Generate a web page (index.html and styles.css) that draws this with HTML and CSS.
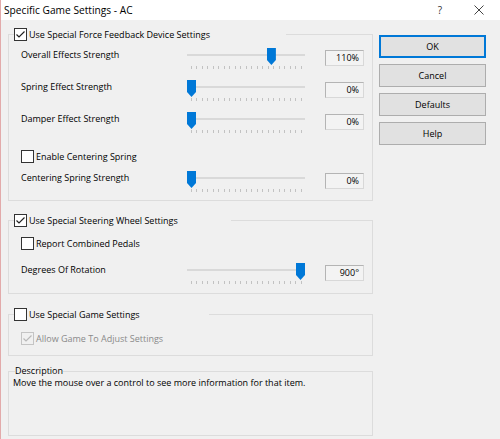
FILE: index.html
```html
<!DOCTYPE html>
<html lang="en">
<head>
  <meta charset="UTF-8" />
  <title>Specific Game Settings - AC</title>
  <link rel="stylesheet" href="styles.css">
</head>
<body>
  <div class="window">
    <div class="titlebar">
      <span class="title">Specific Game Settings - AC</span>
      <span class="tb-help">?</span>
      <span class="tb-close">
        <svg width="10" height="10" viewBox="0 0 10 10"><path d="M0.5 0.5L9.5 9.5M9.5 0.5L0.5 9.5"/></svg>
      </span>
    </div>

    <div class="dialog">
      <div class="panels">
        <!-- force feedback -->
        <fieldset class="group">
          <legend class="legend-ffb">
            <span class="cb"><svg viewBox="0 0 11 11"><path d="M1.5 5.5L4 8L9.5 2.5"/></svg></span>Use Special Force Feedback Device Settings
          </legend>
          <div class="group-body body-ffb">
            <div class="slider-row">
              <span class="row-label">Overall Effects Strength</span>
              <div class="slider" style="--pos: 0.733"><div class="track"></div><div class="ticks"></div><div class="thumb"></div></div>
              <span class="value">110%</span>
            </div>
            <div class="slider-row">
              <span class="row-label">Spring Effect Strength</span>
              <div class="slider" style="--pos: 0"><div class="track"></div><div class="ticks"></div><div class="thumb"></div></div>
              <span class="value">0%</span>
            </div>
            <div class="slider-row">
              <span class="row-label">Damper Effect Strength</span>
              <div class="slider" style="--pos: 0"><div class="track"></div><div class="ticks"></div><div class="thumb"></div></div>
              <span class="value">0%</span>
            </div>
            <label class="check-row centering"><span class="cb"></span>Enable Centering Spring</label>
            <div class="slider-row">
              <span class="row-label">Centering Spring Strength</span>
              <div class="slider" style="--pos: 0"><div class="track"></div><div class="ticks"></div><div class="thumb"></div></div>
              <span class="value">0%</span>
            </div>
          </div>
        </fieldset>

        <!-- steering wheel -->
        <fieldset class="group group-wheel">
          <legend class="legend-wheel">
            <span class="cb"><svg viewBox="0 0 11 11"><path d="M1.5 5.5L4 8L9.5 2.5"/></svg></span>Use Special Steering Wheel Settings
          </legend>
          <div class="group-body body-wheel">
            <label class="check-row"><span class="cb"></span>Report Combined Pedals</label>
            <div class="slider-row rotation">
              <span class="row-label">Degrees Of Rotation</span>
              <div class="slider" style="--pos: 1"><div class="track"></div><div class="ticks"></div><div class="thumb"></div></div>
              <span class="value">900°</span>
            </div>
          </div>
        </fieldset>

        <!-- game -->
        <fieldset class="group group-game">
          <legend class="legend-game"><span class="cb"></span>Use Special Game Settings</legend>
          <div class="group-body body-game">
            <label class="check-row disabled">
              <span class="cb"><svg viewBox="0 0 11 11"><path d="M1.5 5.5L4 8L9.5 2.5"/></svg></span>Allow Game To Adjust Settings
            </label>
          </div>
        </fieldset>

        <fieldset class="group group-desc">
          <legend>Description</legend>
          <div class="desc-text">Move the mouse over a control to see more information for that item.</div>
        </fieldset>
      </div>

      <div class="actions">
        <button class="btn btn-default">OK</button>
        <button class="btn">Cancel</button>
        <button class="btn">Defaults</button>
        <button class="btn">Help</button>
      </div>
    </div>
  </div>
</body>
</html>
```

FILE: styles.css
```css
* { box-sizing: border-box; }
body { margin: 0; background: #f0f0f0; font-family: "Open Sans", "Liberation Sans", sans-serif; font-size: 9px; line-height: 13px; color: #000; }

.window { width: 500px; height: 439px; border-left: 1px solid #e2aaaa; background: #f0f0f0; }
.titlebar { height: 20px; background: #fff; display: flex; align-items: center; padding-left: 3px; }
.title { flex: 1; font-size: 10.2px; }
.tb-help { width: 24px; text-align: center; font-size: 10px; color: #333; }
.tb-close { width: 30px; margin: 0 6px 0 12px; display: flex; justify-content: center; }
.tb-close path { stroke: #444; stroke-width: 1; fill: none; }

.dialog { display: flex; gap: 6px; padding: 8px 0 0 7px; }
.panels { width: 365px; display: flex; flex-direction: column; }

/* group boxes */
.group { margin: 0; padding: 0; min-width: 0; border: 1px solid #dcdcdc; }
.group legend { margin-left: 5px; padding: 0; height: 13px; display: flex; align-items: center; gap: 2px; }
.legend-ffb { width: 272px; }
.legend-wheel { width: 217px; }
.legend-game { width: 195px; }
.group-wheel { margin-top: 13px; }
.group-game { margin-top: 14px; }
.group-desc { margin-top: 9px; }

.group-body { display: flex; flex-direction: column; gap: 8px; padding-left: 12px; }
.body-ffb { padding-top: 7px; padding-bottom: 5px; }
.body-wheel { padding-top: 10px; padding-bottom: 6px; }
.body-game { padding-top: 11px; padding-bottom: 10px; }
.centering { margin-top: 6px; }
.rotation { margin-top: 5px; }

/* checkboxes */
.cb { width: 13px; height: 13px; border: 1px solid #333; background: #fff; display: inline-flex; align-items: center; justify-content: center; flex: none; }
.cb svg { width: 11px; height: 11px; }
.cb path { fill: none; stroke: #222; stroke-width: 1.2; }
.check-row { display: flex; align-items: center; gap: 2px; height: 13px; }
.disabled { color: #8a8a8a; }
.disabled .cb { border-color: #c4c4c4; background: #f0f0f0; }
.disabled .cb path { stroke: #b8b8b8; }

/* sliders */
.slider-row { display: grid; grid-template-columns: 166px 118px 59px; align-items: start; height: 24px; }
.row-label { line-height: 14px; white-space: nowrap; }
.slider { position: relative; height: 24px; }
.track { position: absolute; left: 0; right: 0; top: 6px; height: 2px; background: #d9d9d9; }
.ticks { position: absolute; left: 4px; width: 111px; top: 18px; height: 3px; background: repeating-linear-gradient(to right, #c2c2c2 0 1px, transparent 1px 5.5px); }
.thumb { position: absolute; top: 0; left: calc((100% - 9px) * var(--pos)); width: 9px; height: 17px; background: #0078d7; clip-path: polygon(0 0, 100% 0, 100% 70%, 50% 100%, 0 70%); }
.value { margin: 2px 0 0 20px; height: 16px; line-height: 14px; text-align: right; padding-right: 4px; border: 1px solid #b4b4b4; border-right-color: #d8d8d8; border-bottom-color: #d8d8d8; background: #f3f3f3; }

/* description */
.group-desc legend { margin-left: 6px; height: 12px; line-height: 12px; }
.desc-text { padding: 0 4px; min-height: 58px; line-height: 12px; }

/* buttons */
.actions { width: 107px; padding-top: 7px; display: flex; flex-direction: column; gap: 6px; }
.btn { height: 23px; padding: 0; border: 1px solid #adadad; background: #e1e1e1; font: inherit; color: #000; }
.btn-default { border: 2px solid #0078d7; }
```
